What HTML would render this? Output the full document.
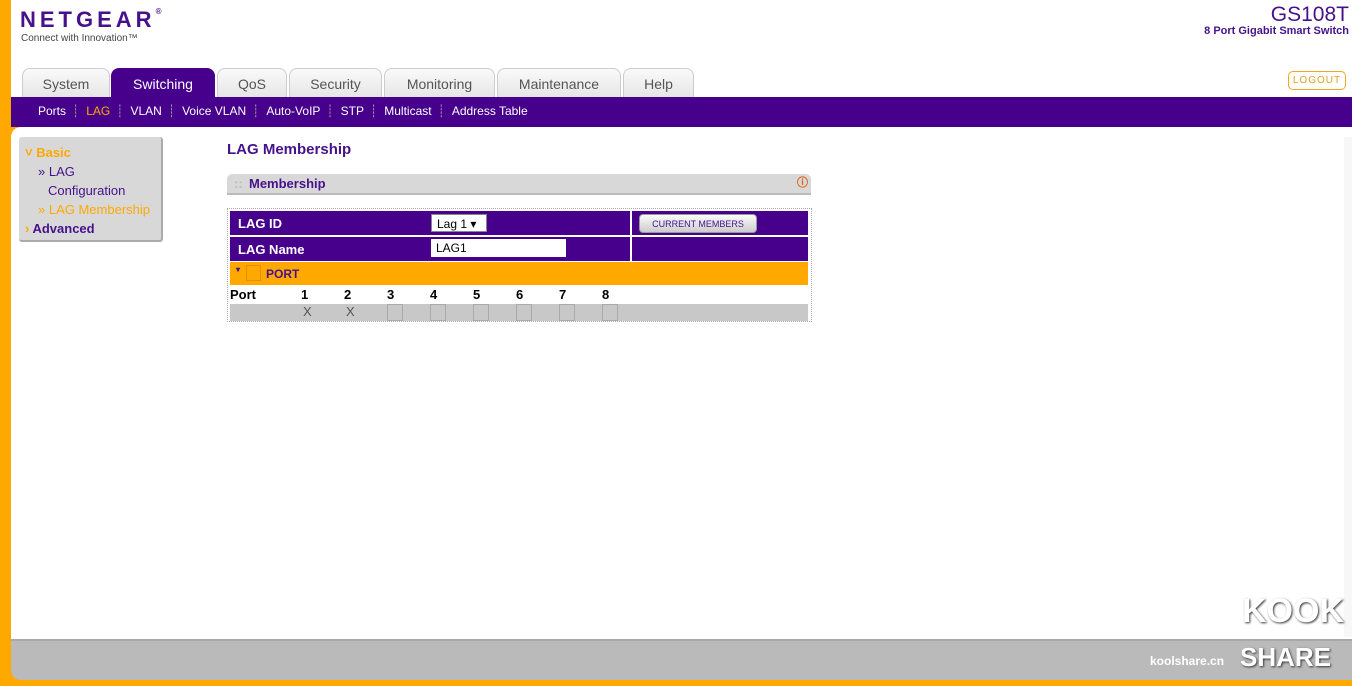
<!DOCTYPE html>
<html><head><meta charset="utf-8"><style>
*{margin:0;padding:0;box-sizing:border-box}
body{width:1352px;height:686px;background:#ffa800;position:relative;overflow:hidden;font-family:"Liberation Sans",sans-serif}
.top{position:absolute;left:11px;top:0;width:1341px;height:97px;background:#fff}
.logo{position:absolute;left:20px;top:7px;font-size:22px;font-weight:bold;letter-spacing:4px;color:#46128c}
.tag{position:absolute;left:21px;top:33px;font-size:10px;color:#444}
.model{position:absolute;right:3px;top:3px;font-size:21px;color:#46128c}
.sub{position:absolute;right:3px;top:25px;font-size:11px;color:#46128c;font-weight:bold}
.logout{position:absolute;left:1288px;top:71px;width:58px;height:19px;border:1px solid #f0a820;border-radius:5px;color:#e0a020;font-size:10px;text-align:center;line-height:17px;letter-spacing:1px}
.tab{position:absolute;top:68px;height:29px;background:linear-gradient(#fafafa,#e6e6e6);border:1px solid #ccc;border-bottom:none;border-radius:8px 8px 0 0;font-size:14px;color:#555;text-align:center;line-height:30px}
.tab.on{background:#46008c;color:#fff;border-color:#46008c}
.bar{position:absolute;left:11px;top:97px;width:1341px;height:30px;background:#46008c}
.menu{position:absolute;left:38px;top:104px;font-size:12px;color:#fff}
.menu span{margin-right:3px}.menu i{font-style:normal;color:#999;margin:0 7px 0 3px}
.main{position:absolute;left:11px;top:127px;width:1341px;height:513px;background:#fff;border-radius:10px 0 0 0}
.foot{position:absolute;left:11px;top:639px;width:1341px;height:41px;background:#bababa;border-top:2px solid #a8a8a8;border-radius:0 0 0 10px}
.nav{position:absolute;left:19px;top:137px;width:144px;height:105px;background:#d8d8d8;border-right:2px solid #aaa;border-bottom:2px solid #aaa;border-radius:3px;font-size:13px}
.nav div{position:absolute}
h1{position:absolute;left:227px;top:141px;font-size:15px;color:#46128c}
.hdr{position:absolute;left:227px;top:174px;width:584px;height:21px;background:#d8d8d8;border-bottom:2px solid #bbb;border-radius:5px 5px 0 0;font-size:13px;font-weight:bold;color:#46128c;line-height:19px;padding-left:22px}
.box{position:absolute;left:227px;top:208px;width:585px;height:114px;border:1px dotted #aaa}
.p{position:absolute;background:#46008c;color:#fff;font-size:13px;font-weight:bold}
</style></head><body>
<div class="top"></div>
<div class="logo">NETGEAR<span style="font-size:8px;vertical-align:top;letter-spacing:0">®</span></div>
<div class="tag">Connect with Innovation™</div>
<div class="model">GS108T</div>
<div class="sub">8 Port Gigabit Smart Switch</div>
<div class="logout">LOGOUT</div>
<div class="tab" style="left:22px;width:88px">System</div>
<div class="tab on" style="left:111px;width:104px">Switching</div>
<div class="tab" style="left:217px;width:70px">QoS</div>
<div class="tab" style="left:289px;width:93px">Security</div>
<div class="tab" style="left:384px;width:111px">Monitoring</div>
<div class="tab" style="left:497px;width:124px">Maintenance</div>
<div class="tab" style="left:623px;width:71px">Help</div>
<div class="bar"></div>
<div class="menu"><span>Ports</span><i>┊</i><span style="color:#ffa800">LAG</span><i>┊</i><span>VLAN</span><i>┊</i><span>Voice VLAN</span><i>┊</i><span>Auto-VoIP</span><i>┊</i><span>STP</span><i>┊</i><span>Multicast</span><i>┊</i><span>Address Table</span></div>
<div class="main"></div>
<div class="foot"></div>
<div style="position:absolute;left:1344px;top:137px;width:8px;height:500px;background:#f7f7f7"></div>
<div class="nav">
<div style="left:6px;top:8px;color:#ffa800;font-weight:bold">˅ Basic</div>
<div style="left:19px;top:27px;color:#46128c">» LAG</div>
<div style="left:29px;top:46px;color:#46128c">Configuration</div>
<div style="left:19px;top:65px;color:#ffa800">» LAG Membership</div>
<div style="left:6px;top:84px;color:#46128c;font-weight:bold"><span style="color:#ffa800">›</span> Advanced</div>
</div>
<h1>LAG Membership</h1>
<div class="hdr"><span style="position:absolute;left:7px;color:#bbb">::</span>Membership<span style="position:absolute;right:3px;top:0;color:#e05a00;font-size:11px">ⓘ</span></div>
<div class="box">
<div class="p" style="left:2px;top:2px;width:400px;height:24px;padding:5px 8px">LAG ID</div>
<div class="p" style="left:202px;top:2px;width:200px;height:24px"></div>
<div class="p" style="left:404px;top:2px;width:176px;height:24px"></div>
<div style="position:absolute;left:203px;top:5px;width:56px;height:18px;background:#fff;font-size:12px;padding:2px 5px;border:1px solid #888">Lag 1 ▾</div>
<div style="position:absolute;left:411px;top:5px;width:118px;height:19px;background:linear-gradient(#fafafa,#ccc);border:1px solid #999;border-radius:4px;font-size:9px;color:#46128c;text-align:center;line-height:18px">CURRENT MEMBERS</div>
<div class="p" style="left:2px;top:28px;width:400px;height:24px;padding:5px 8px">LAG Name</div>
<div class="p" style="left:404px;top:28px;width:176px;height:24px"></div>
<div style="position:absolute;left:203px;top:30px;width:135px;height:18px;background:#fff;font-size:12px;padding:2px 5px">LAG1</div>
<div style="position:absolute;left:2px;top:53px;width:578px;height:23px;background:#ffa800;font-size:12px;font-weight:bold;color:#46128c;padding:5px 0 0 36px">PORT<span style="position:absolute;left:6px;top:3px;font-size:8px;color:#46128c">▾</span><span style="position:absolute;left:16px;top:3px;width:15px;height:16px;border:1px solid #e09000"></span></div>
<div style="position:absolute;left:2px;top:78px;font-size:13px;font-weight:bold;width:400px">Port<span style="position:absolute;left:71px">1</span><span style="position:absolute;left:114px">2</span><span style="position:absolute;left:157px">3</span><span style="position:absolute;left:200px">4</span><span style="position:absolute;left:243px">5</span><span style="position:absolute;left:286px">6</span><span style="position:absolute;left:329px">7</span><span style="position:absolute;left:372px">8</span></div>
<div style="position:absolute;left:2px;top:95px;width:578px;height:17px;background:#c8c8c8;font-size:13px;color:#555">
<span style="position:absolute;left:73px">X</span><span style="position:absolute;left:116px">X</span>
<span style="position:absolute;left:157px;width:16px;height:17px;border:1px solid #aaa"></span>
<span style="position:absolute;left:200px;width:16px;height:17px;border:1px solid #aaa"></span>
<span style="position:absolute;left:243px;width:16px;height:17px;border:1px solid #aaa"></span>
<span style="position:absolute;left:286px;width:16px;height:17px;border:1px solid #aaa"></span>
<span style="position:absolute;left:329px;width:16px;height:17px;border:1px solid #aaa"></span>
<span style="position:absolute;left:372px;width:16px;height:17px;border:1px solid #aaa"></span>
</div>
</div>
<div style="position:absolute;left:1150px;top:654px;font-size:12px;font-weight:bold;color:#fff">koolshare.cn</div>
<div style="position:absolute;left:1242px;top:592px;font-size:34px;font-weight:bold;color:#fff;text-shadow:1px 1px 2px #333">KOOK</div>
<div style="position:absolute;left:1240px;top:642px;font-size:26px;font-weight:bold;color:#fff;text-shadow:1px 1px 2px #333">SHARE</div>
</body></html>
